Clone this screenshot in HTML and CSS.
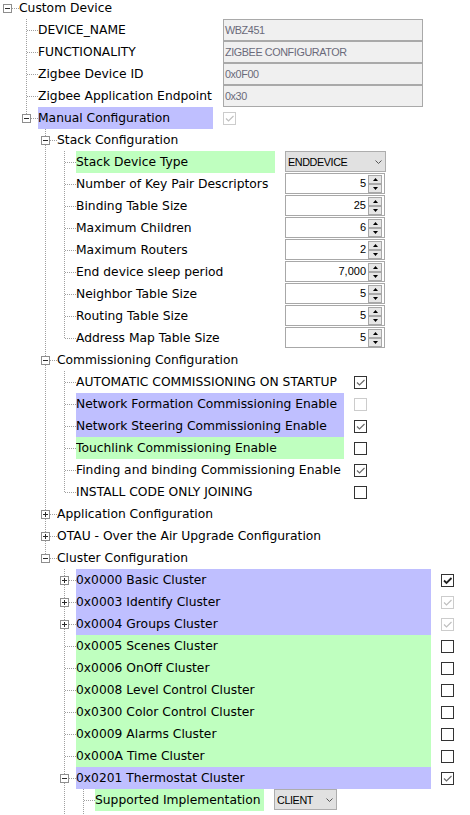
FILE: index.html
```html
<!DOCTYPE html>
<html>
<head>
<meta charset="utf-8">
<link rel="stylesheet" href="styles.css">
</head>
<body>
<div class="tree">
  <div class="row"><span class="c r"><span class="exp minus"></span></span><span class="lbl">Custom Device</span></div>

  <div class="row"><span class="c"></span><span class="c t"></span><span class="lbl wA">DEVICE_NAME</span><span class="tb">WBZ451</span></div>
  <div class="row"><span class="c"></span><span class="c t"></span><span class="lbl wA">FUNCTIONALITY</span><span class="tb">ZIGBEE CONFIGURATOR</span></div>
  <div class="row"><span class="c"></span><span class="c t"></span><span class="lbl wA">Zigbee Device ID</span><span class="tb">0x0F00</span></div>
  <div class="row"><span class="c"></span><span class="c t"></span><span class="lbl wA">Zigbee Application Endpoint</span><span class="tb">0x30</span></div>
  <div class="row"><span class="c"></span><span class="c l"><span class="exp minus"></span></span><span class="lbl wA hp">Manual Configuration</span><span class="chk dis"><svg viewBox="0 0 11 11" width="11" height="11"><polyline points="2,5.5 4.5,8 9.5,3"/></svg></span></div>

  <div class="row"><span class="c"></span><span class="c"></span><span class="c t"><span class="exp minus"></span></span><span class="lbl">Stack Configuration</span></div>
  <div class="row"><span class="c"></span><span class="c"></span><span class="c v"></span><span class="c t"></span><span class="lbl wB hg">Stack Device Type</span><span class="sel s1">ENDDEVICE<svg viewBox="0 0 7 4" width="7" height="4"><polyline points="0.5,0.5 3.5,3.5 6.5,0.5"/></svg></span></div>
  <div class="row"><span class="c"></span><span class="c"></span><span class="c v"></span><span class="c t"></span><span class="lbl wB">Number of Key Pair Descriptors</span><span class="spin"><span class="num">5</span><span class="btns"><span class="b"><svg viewBox="0 0 5 3" width="5" height="3"><path d="M0 3H5L2.5 0Z"/></svg></span><span class="b"><svg viewBox="0 0 5 3" width="5" height="3"><path d="M0 0H5L2.5 3Z"/></svg></span></span></span></div>
  <div class="row"><span class="c"></span><span class="c"></span><span class="c v"></span><span class="c t"></span><span class="lbl wB">Binding Table Size</span><span class="spin"><span class="num">25</span><span class="btns"><span class="b"><svg viewBox="0 0 5 3" width="5" height="3"><path d="M0 3H5L2.5 0Z"/></svg></span><span class="b"><svg viewBox="0 0 5 3" width="5" height="3"><path d="M0 0H5L2.5 3Z"/></svg></span></span></span></div>
  <div class="row"><span class="c"></span><span class="c"></span><span class="c v"></span><span class="c t"></span><span class="lbl wB">Maximum Children</span><span class="spin"><span class="num">6</span><span class="btns"><span class="b"><svg viewBox="0 0 5 3" width="5" height="3"><path d="M0 3H5L2.5 0Z"/></svg></span><span class="b"><svg viewBox="0 0 5 3" width="5" height="3"><path d="M0 0H5L2.5 3Z"/></svg></span></span></span></div>
  <div class="row"><span class="c"></span><span class="c"></span><span class="c v"></span><span class="c t"></span><span class="lbl wB">Maximum Routers</span><span class="spin"><span class="num">2</span><span class="btns"><span class="b"><svg viewBox="0 0 5 3" width="5" height="3"><path d="M0 3H5L2.5 0Z"/></svg></span><span class="b"><svg viewBox="0 0 5 3" width="5" height="3"><path d="M0 0H5L2.5 3Z"/></svg></span></span></span></div>
  <div class="row"><span class="c"></span><span class="c"></span><span class="c v"></span><span class="c t"></span><span class="lbl wB">End device sleep period</span><span class="spin"><span class="num">7,000</span><span class="btns"><span class="b"><svg viewBox="0 0 5 3" width="5" height="3"><path d="M0 3H5L2.5 0Z"/></svg></span><span class="b"><svg viewBox="0 0 5 3" width="5" height="3"><path d="M0 0H5L2.5 3Z"/></svg></span></span></span></div>
  <div class="row"><span class="c"></span><span class="c"></span><span class="c v"></span><span class="c t"></span><span class="lbl wB">Neighbor Table Size</span><span class="spin"><span class="num">5</span><span class="btns"><span class="b"><svg viewBox="0 0 5 3" width="5" height="3"><path d="M0 3H5L2.5 0Z"/></svg></span><span class="b"><svg viewBox="0 0 5 3" width="5" height="3"><path d="M0 0H5L2.5 3Z"/></svg></span></span></span></div>
  <div class="row"><span class="c"></span><span class="c"></span><span class="c v"></span><span class="c t"></span><span class="lbl wB">Routing Table Size</span><span class="spin"><span class="num">5</span><span class="btns"><span class="b"><svg viewBox="0 0 5 3" width="5" height="3"><path d="M0 3H5L2.5 0Z"/></svg></span><span class="b"><svg viewBox="0 0 5 3" width="5" height="3"><path d="M0 0H5L2.5 3Z"/></svg></span></span></span></div>
  <div class="row"><span class="c"></span><span class="c"></span><span class="c v"></span><span class="c l"></span><span class="lbl wB">Address Map Table Size</span><span class="spin"><span class="num">5</span><span class="btns"><span class="b"><svg viewBox="0 0 5 3" width="5" height="3"><path d="M0 3H5L2.5 0Z"/></svg></span><span class="b"><svg viewBox="0 0 5 3" width="5" height="3"><path d="M0 0H5L2.5 3Z"/></svg></span></span></span></div>

  <div class="row"><span class="c"></span><span class="c"></span><span class="c t"><span class="exp minus"></span></span><span class="lbl">Commissioning Configuration</span></div>
  <div class="row"><span class="c"></span><span class="c"></span><span class="c v"></span><span class="c t"></span><span class="lbl wC">AUTOMATIC COMMISSIONING ON STARTUP</span><span class="chk"><svg viewBox="0 0 11 11" width="11" height="11"><polyline points="2,5.5 4.5,8 9.5,3"/></svg></span></div>
  <div class="row"><span class="c"></span><span class="c"></span><span class="c v"></span><span class="c t"></span><span class="lbl wC hp">Network Formation Commissioning Enable</span><span class="chk dis"></span></div>
  <div class="row"><span class="c"></span><span class="c"></span><span class="c v"></span><span class="c t"></span><span class="lbl wC hp">Network Steering Commissioning Enable</span><span class="chk"><svg viewBox="0 0 11 11" width="11" height="11"><polyline points="2,5.5 4.5,8 9.5,3"/></svg></span></div>
  <div class="row"><span class="c"></span><span class="c"></span><span class="c v"></span><span class="c t"></span><span class="lbl wC hg">Touchlink Commissioning Enable</span><span class="chk"></span></div>
  <div class="row"><span class="c"></span><span class="c"></span><span class="c v"></span><span class="c t"></span><span class="lbl wC">Finding and binding Commissioning Enable</span><span class="chk"><svg viewBox="0 0 11 11" width="11" height="11"><polyline points="2,5.5 4.5,8 9.5,3"/></svg></span></div>
  <div class="row"><span class="c"></span><span class="c"></span><span class="c v"></span><span class="c l"></span><span class="lbl wC">INSTALL CODE ONLY JOINING</span><span class="chk"></span></div>

  <div class="row"><span class="c"></span><span class="c"></span><span class="c t"><span class="exp plus"></span></span><span class="lbl">Application Configuration</span></div>
  <div class="row"><span class="c"></span><span class="c"></span><span class="c t"><span class="exp plus"></span></span><span class="lbl">OTAU - Over the Air Upgrade Configuration</span></div>
  <div class="row"><span class="c"></span><span class="c"></span><span class="c l"><span class="exp minus"></span></span><span class="lbl">Cluster Configuration</span></div>

  <div class="row"><span class="c"></span><span class="c"></span><span class="c"></span><span class="c t"><span class="exp plus"></span></span><span class="lbl wD hp">0x0000 Basic Cluster</span><span class="chk strong"><svg viewBox="0 0 11 11" width="11" height="11"><polyline points="2,5.5 4.5,8 9.5,3"/></svg></span></div>
  <div class="row"><span class="c"></span><span class="c"></span><span class="c"></span><span class="c t"><span class="exp plus"></span></span><span class="lbl wD hp">0x0003 Identify Cluster</span><span class="chk dis"><svg viewBox="0 0 11 11" width="11" height="11"><polyline points="2,5.5 4.5,8 9.5,3"/></svg></span></div>
  <div class="row"><span class="c"></span><span class="c"></span><span class="c"></span><span class="c t"><span class="exp plus"></span></span><span class="lbl wD hp">0x0004 Groups Cluster</span><span class="chk dis"><svg viewBox="0 0 11 11" width="11" height="11"><polyline points="2,5.5 4.5,8 9.5,3"/></svg></span></div>
  <div class="row"><span class="c"></span><span class="c"></span><span class="c"></span><span class="c t"></span><span class="lbl wD hg">0x0005 Scenes Cluster</span><span class="chk"></span></div>
  <div class="row"><span class="c"></span><span class="c"></span><span class="c"></span><span class="c t"></span><span class="lbl wD hg">0x0006 OnOff Cluster</span><span class="chk"></span></div>
  <div class="row"><span class="c"></span><span class="c"></span><span class="c"></span><span class="c t"></span><span class="lbl wD hg">0x0008 Level Control Cluster</span><span class="chk"></span></div>
  <div class="row"><span class="c"></span><span class="c"></span><span class="c"></span><span class="c t"></span><span class="lbl wD hg">0x0300 Color Control Cluster</span><span class="chk"></span></div>
  <div class="row"><span class="c"></span><span class="c"></span><span class="c"></span><span class="c t"></span><span class="lbl wD hg">0x0009 Alarms Cluster</span><span class="chk"></span></div>
  <div class="row"><span class="c"></span><span class="c"></span><span class="c"></span><span class="c t"></span><span class="lbl wD hg">0x000A Time Cluster</span><span class="chk"></span></div>
  <div class="row"><span class="c"></span><span class="c"></span><span class="c"></span><span class="c t"><span class="exp minus"></span></span><span class="lbl wD hp">0x0201 Thermostat Cluster</span><span class="chk"><svg viewBox="0 0 11 11" width="11" height="11"><polyline points="2,5.5 4.5,8 9.5,3"/></svg></span></div>
  <div class="row"><span class="c"></span><span class="c"></span><span class="c"></span><span class="c v"></span><span class="c t"></span><span class="lbl wE hg">Supported Implementation</span><span class="sel s2">CLIENT<svg viewBox="0 0 7 4" width="7" height="4"><polyline points="0.5,0.5 3.5,3.5 6.5,0.5"/></svg></span></div>
  <div class="row"><span class="c"></span><span class="c"></span><span class="c"></span><span class="c v"></span><span class="c v"></span></div>
</div>
</body>
</html>
```

FILE: styles.css
```css
html, body {
  margin: 0;
  padding: 0;
  background: #ffffff;
  overflow: hidden;
}

.tree {
  margin-top: -3px;
  font-family: "DejaVu Sans", Verdana, sans-serif;
  font-size: 12.3px;
  color: #000000;
}

.row {
  display: flex;
  align-items: flex-start;
  height: 22px;
}

/* tree connector cells */
.c {
  flex: none;
  width: 19px;
  height: 22px;
  display: flex;
  align-items: flex-start;
}
.c.v {
  background: repeating-linear-gradient(to bottom, #a0a0a0 0 1px, transparent 1px 2px) 7px 0 / 1px 22px no-repeat;
}
.c.t {
  background:
    repeating-linear-gradient(to right, #a0a0a0 0 1px, transparent 1px 2px) 8px 11px / 11px 1px no-repeat,
    repeating-linear-gradient(to bottom, #a0a0a0 0 1px, transparent 1px 2px) 7px 0 / 1px 22px no-repeat;
}
.c.l {
  background:
    repeating-linear-gradient(to right, #a0a0a0 0 1px, transparent 1px 2px) 8px 11px / 11px 1px no-repeat,
    repeating-linear-gradient(to bottom, #a0a0a0 0 1px, transparent 1px 2px) 7px 0 / 1px 12px no-repeat;
}
.c.r {
  background: repeating-linear-gradient(to right, #a0a0a0 0 1px, transparent 1px 2px) 8px 11px / 11px 1px no-repeat;
}

/* expander boxes */
.exp {
  box-sizing: border-box;
  width: 9px;
  height: 9px;
  margin: 7px 0 0 3px;
  border: 1px solid #8e8e8e;
  background-color: #ffffff;
}
.exp.minus {
  background-image: linear-gradient(#2b2b2b, #2b2b2b);
  background-size: 5px 1px;
  background-position: center;
  background-repeat: no-repeat;
}
.exp.plus {
  background-image: linear-gradient(#2b2b2b, #2b2b2b), linear-gradient(#2b2b2b, #2b2b2b);
  background-size: 5px 1px, 1px 5px;
  background-position: center, center;
  background-repeat: no-repeat;
}

/* labels */
.lbl {
  flex: none;
  height: 22px;
  line-height: 23px;
  white-space: nowrap;
  overflow: hidden;
}
.wA { width: 175px; }
.wB { width: 199px; }
.wC { width: 268px; }
.wD { width: 355px; }
.wE { width: 169px; }
.hp { background: #bfbfff; }
.hg { background: #bfffbf; }

/* read-only text boxes */
.tb {
  flex: none;
  box-sizing: border-box;
  margin-left: 10px;
  width: 200px;
  height: 22px;
  padding-left: 1px;
  border: 1px solid #a9a9a9;
  background: #f0f0f0;
  color: #6a6a7a;
  font-family: "Liberation Sans", Arial, sans-serif;
  font-size: 10.8px;
  letter-spacing: -0.4px;
  line-height: 20px;
  white-space: nowrap;
}

/* checkboxes */
.chk {
  flex: none;
  box-sizing: border-box;
  width: 13px;
  height: 13px;
  margin: 5px 0 0 10px;
  border: 1px solid #333333;
  background: #ffffff;
  display: flex;
}
.chk svg {
  fill: none;
  stroke: #6a6a6a;
  stroke-width: 1.2;
}
.chk.dis {
  border-color: #cccccc;
}
.chk.dis svg {
  stroke: #c0c0c0;
}
.chk.strong svg {
  stroke: #222222;
  stroke-width: 1.8;
}

/* spinners */
.spin {
  flex: none;
  box-sizing: border-box;
  display: flex;
  margin-left: 10px;
  width: 100px;
  height: 21px;
  border: 1px solid #a8a8a8;
  background: #ffffff;
  font-family: "Liberation Sans", Arial, sans-serif;
  font-size: 11px;
}
.num {
  flex: 1;
  text-align: right;
  line-height: 19px;
  padding-right: 2px;
}
.btns {
  flex: none;
  width: 14px;
  padding-top: 1px;
  margin-right: 2px;
  display: flex;
  flex-direction: column;
}
.b {
  box-sizing: border-box;
  height: 9px;
  border: 1px solid #a8a8a8;
  background: #e6e6e6;
  display: flex;
  align-items: center;
  justify-content: center;
}
.b svg {
  fill: #000000;
}

/* drop-downs */
.sel {
  flex: none;
  box-sizing: border-box;
  display: flex;
  align-items: center;
  margin-left: 10px;
  height: 21px;
  padding-left: 2px;
  border: 1px solid #adadad;
  background: #e1e1e1;
  font-family: "Liberation Sans", Arial, sans-serif;
  font-size: 10.8px;
  letter-spacing: -0.4px;
  color: #000000;
  white-space: nowrap;
}
.sel svg {
  margin-left: auto;
  margin-right: 3px;
  fill: none;
  stroke: #555555;
  stroke-width: 1;
}
.s1 { width: 101px; }
.s2 { width: 63px; }
```
